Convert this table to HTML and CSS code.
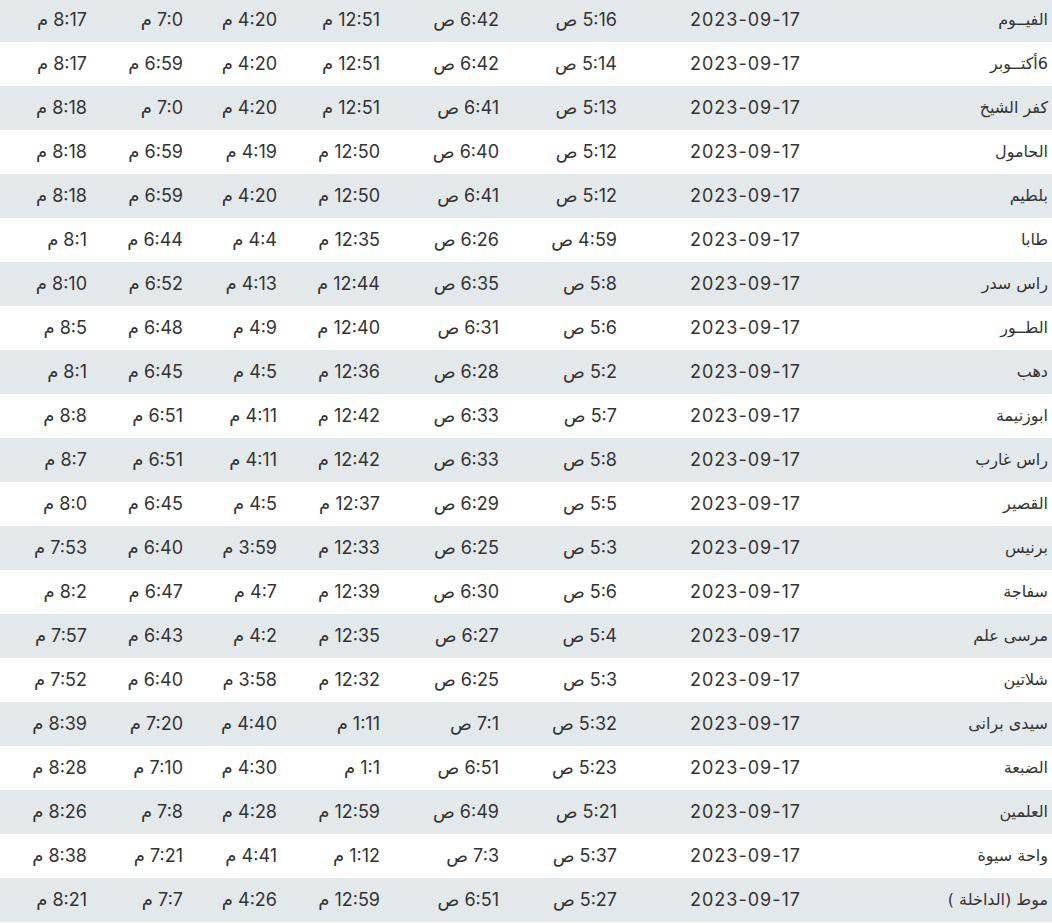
FILE: index.html
```html
<!DOCTYPE html>
<html lang="ar" dir="rtl">
<head>
<meta charset="utf-8">
<link rel="stylesheet" href="styles.css">
</head>
<body>
<table class="times">
<colgroup>
<col class="c-name"><col class="c-date"><col class="c-fajr"><col class="c-sun"><col class="c-dhuhr"><col class="c-asr"><col class="c-magh"><col class="c-isha">
</colgroup>
<tbody>
<tr><td class="name">الفيــوم</td><td>2023-09-17</td><td>5:16 ص</td><td>6:42 ص</td><td>12:51 م</td><td>4:20 م</td><td>7:0 م</td><td>8:17 م</td></tr>
<tr><td class="name">6أكتــوبر</td><td>2023-09-17</td><td>5:14 ص</td><td>6:42 ص</td><td>12:51 م</td><td>4:20 م</td><td>6:59 م</td><td>8:17 م</td></tr>
<tr><td class="name">كفر الشيخ</td><td>2023-09-17</td><td>5:13 ص</td><td>6:41 ص</td><td>12:51 م</td><td>4:20 م</td><td>7:0 م</td><td>8:18 م</td></tr>
<tr><td class="name">الحامول</td><td>2023-09-17</td><td>5:12 ص</td><td>6:40 ص</td><td>12:50 م</td><td>4:19 م</td><td>6:59 م</td><td>8:18 م</td></tr>
<tr><td class="name">بلطيم</td><td>2023-09-17</td><td>5:12 ص</td><td>6:41 ص</td><td>12:50 م</td><td>4:20 م</td><td>6:59 م</td><td>8:18 م</td></tr>
<tr><td class="name">طابا</td><td>2023-09-17</td><td>4:59 ص</td><td>6:26 ص</td><td>12:35 م</td><td>4:4 م</td><td>6:44 م</td><td>8:1 م</td></tr>
<tr><td class="name">راس سدر</td><td>2023-09-17</td><td>5:8 ص</td><td>6:35 ص</td><td>12:44 م</td><td>4:13 م</td><td>6:52 م</td><td>8:10 م</td></tr>
<tr><td class="name">الطــور</td><td>2023-09-17</td><td>5:6 ص</td><td>6:31 ص</td><td>12:40 م</td><td>4:9 م</td><td>6:48 م</td><td>8:5 م</td></tr>
<tr><td class="name">دهب</td><td>2023-09-17</td><td>5:2 ص</td><td>6:28 ص</td><td>12:36 م</td><td>4:5 م</td><td>6:45 م</td><td>8:1 م</td></tr>
<tr><td class="name">ابوزنيمة</td><td>2023-09-17</td><td>5:7 ص</td><td>6:33 ص</td><td>12:42 م</td><td>4:11 م</td><td>6:51 م</td><td>8:8 م</td></tr>
<tr><td class="name">راس غارب</td><td>2023-09-17</td><td>5:8 ص</td><td>6:33 ص</td><td>12:42 م</td><td>4:11 م</td><td>6:51 م</td><td>8:7 م</td></tr>
<tr><td class="name">القصير</td><td>2023-09-17</td><td>5:5 ص</td><td>6:29 ص</td><td>12:37 م</td><td>4:5 م</td><td>6:45 م</td><td>8:0 م</td></tr>
<tr><td class="name">برنيس</td><td>2023-09-17</td><td>5:3 ص</td><td>6:25 ص</td><td>12:33 م</td><td>3:59 م</td><td>6:40 م</td><td>7:53 م</td></tr>
<tr><td class="name">سفاجة</td><td>2023-09-17</td><td>5:6 ص</td><td>6:30 ص</td><td>12:39 م</td><td>4:7 م</td><td>6:47 م</td><td>8:2 م</td></tr>
<tr><td class="name">مرسى علم</td><td>2023-09-17</td><td>5:4 ص</td><td>6:27 ص</td><td>12:35 م</td><td>4:2 م</td><td>6:43 م</td><td>7:57 م</td></tr>
<tr><td class="name">شلاتين</td><td>2023-09-17</td><td>5:3 ص</td><td>6:25 ص</td><td>12:32 م</td><td>3:58 م</td><td>6:40 م</td><td>7:52 م</td></tr>
<tr><td class="name">سيدى برانى</td><td>2023-09-17</td><td>5:32 ص</td><td>7:1 ص</td><td>1:11 م</td><td>4:40 م</td><td>7:20 م</td><td>8:39 م</td></tr>
<tr><td class="name">الضبعة</td><td>2023-09-17</td><td>5:23 ص</td><td>6:51 ص</td><td>1:1 م</td><td>4:30 م</td><td>7:10 م</td><td>8:28 م</td></tr>
<tr><td class="name">العلمين</td><td>2023-09-17</td><td>5:21 ص</td><td>6:49 ص</td><td>12:59 م</td><td>4:28 م</td><td>7:8 م</td><td>8:26 م</td></tr>
<tr><td class="name">واحة سيوة</td><td>2023-09-17</td><td>5:37 ص</td><td>7:3 ص</td><td>1:12 م</td><td>4:41 م</td><td>7:21 م</td><td>8:38 م</td></tr>
<tr><td class="name">موط (الداخلة )</td><td>2023-09-17</td><td>5:27 ص</td><td>6:51 ص</td><td>12:59 م</td><td>4:26 م</td><td>7:7 م</td><td>8:21 م</td></tr>
</tbody>
</table>
</body>
</html>
```
FILE: styles.css
```css
html, body {
  margin: 0;
  padding: 0;
  background: #ffffff;
}
body {
  font-family: Inter, "DejaVu Sans", sans-serif;
  color: #333333;
}
.times {
  width: 1052px;
  border-collapse: collapse;
  table-layout: fixed;
  margin-top: -2px;
}
.c-name { width: 248px; }
.c-date { width: 183px; }
.c-fajr { width: 118px; }
.c-sun { width: 119px; }
.c-dhuhr { width: 103px; }
.c-asr { width: 94px; }
.c-magh { width: 96px; }
.c-isha { width: 91px; }
.times td {
  height: 44px;
  padding: 0 4px 2px 0;
  box-sizing: border-box;
  text-align: right;
  font-size: 18px;
  white-space: nowrap;
  vertical-align: middle;
}
.times td:nth-child(2) {
  letter-spacing: 1px;
  padding-right: 3px;
}
.times tr:nth-child(odd) td {
  background: #e3e8eb;
}
.times td.name {
  font-family: "DejaVu Sans", sans-serif;
  font-size: 16px;
}
```
